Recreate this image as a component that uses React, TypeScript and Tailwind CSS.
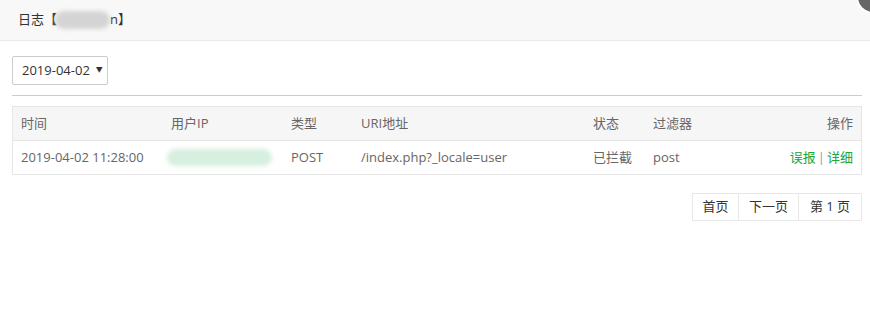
import React from "react";

const font = { fontFamily: '"Open Sans", "Noto Sans CJK SC", sans-serif' };

const cols = [
  { key: "time", label: "时间", w: "w-[150px]" },
  { key: "ip", label: "用户IP", w: "w-[120px]" },
  { key: "type", label: "类型", w: "w-[70px]" },
  { key: "uri", label: "URI地址", w: "w-[232px]" },
  { key: "status", label: "状态", w: "w-[60px]" },
  { key: "filter", label: "过滤器", w: "w-[100px]" },
];

export default function App() {
  return (
    <div className="relative w-[870px] h-[333px] bg-white overflow-hidden text-[13px] text-[#666]" style={font}>
      {/* 标题栏 */}
      <div className="h-[41px] bg-[#f8f8f8] border-b border-[#e9e9e9] flex items-center pl-[18px] text-[#333]">
        <span>日志【</span>
        <span className="inline-block w-[55px] h-[18px] bg-[#d4d4d4] rounded-full blur-[2px] -ml-[2px]" />
        <span>n】</span>
      </div>
      {/* 关闭按钮 */}
      <div className="absolute -top-[20px] -right-[20px] w-[34px] h-[34px] rounded-full bg-[#666] border-2 border-white" />

      <div className="pl-[12px] pr-[8px] pt-[15px]">
        <div className="w-[96px] h-[29px] border border-[#ccc] rounded-[2px] flex items-center pl-[9px] text-[#333]">
          2019-04-02
          <span className="ml-[6px] text-[7px]">▼</span>
        </div>
        <div className="mt-[10px] border-t border-[#ccc]" />

        {/* 表格 */}
        <div className="mt-[10px] border border-[#e6e6e6]">
          <div className="h-[34px] bg-[#f6f6f6] border-b border-[#e6e6e6] flex items-center pl-[8px] pr-[8px] text-[#666]">
            {cols.map((c) => (
              <div key={c.key} className={c.w}>
                {c.label}
              </div>
            ))}
            <div className="flex-1 text-right">操作</div>
          </div>
          <div className="h-[33px] flex items-center pl-[8px] pr-[8px]">
            <div className="w-[150px]">2019-04-02 11:28:00</div>
            <div className="w-[120px] flex items-center">
              <span className="inline-block w-[105px] h-[17px] -ml-[4px] rounded-full bg-[#d6efdf] blur-[2px]" />
            </div>
            <div className="w-[70px]">POST</div>
            <div className="w-[232px]">/index.php?_locale=user</div>
            <div className="w-[60px]">已拦截</div>
            <div className="w-[100px]">post</div>
            <div className="flex-1 text-right">
              <a className="text-[#20a53a]">误报</a>
              <span className="text-[#999] mx-[2px]">|</span>
              <a className="text-[#20a53a]">详细</a>
            </div>
          </div>
        </div>

        {/* 分页 */}
        <div className="mt-[18px] flex justify-end">
          <div className="flex border border-[#e8e8e8] h-[28px] text-[#333]">
            <div className="w-[46px] flex items-center justify-center border-r border-[#e8e8e8]">首页</div>
            <div className="w-[60px] flex items-center justify-center border-r border-[#e8e8e8]">下一页</div>
            <div className="w-[62px] flex items-center justify-center">第 1 页</div>
          </div>
        </div>
      </div>
    </div>
  );
}
